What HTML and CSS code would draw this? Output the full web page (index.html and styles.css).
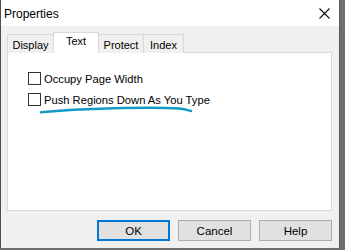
FILE: index.html
```html
<!DOCTYPE html>
<html>
<head>
<meta charset="utf-8">
<link rel="stylesheet" href="styles.css">
</head>
<body>
<div class="dialog">
  <div class="titlebar">
    <span class="title">Properties</span>
    <svg class="close" width="11" height="11" viewBox="0 0 11 11"><path d="M0.5 0.5 L10.5 10.5 M10.5 0.5 L0.5 10.5" stroke="#111" stroke-width="1.1" fill="none"/></svg>
  </div>
  <div class="body">
    <div class="tabs">
      <div class="tab t-display">Display</div>
      <div class="tab t-text selected">Text</div>
      <div class="tab t-protect">Protect</div>
      <div class="tab t-index">Index</div>
    </div>
    <div class="panel">
      <label class="row"><span class="box"></span><span>Occupy Page Width</span></label>
      <label class="row"><span class="box"></span><span>Push Regions Down As You Type</span></label>
      <svg class="scribble" width="160" height="10" viewBox="0 0 160 10"><path d="M2 7.3 C 20 5.5, 45 4, 75 3.2 C 105 2.5, 125 2.4, 140 3.5 C 147 4, 150 5.5, 152 6" stroke="#1799c6" stroke-width="2.4" fill="none" stroke-linecap="round"/></svg>
    </div>
    <div class="buttons">
      <div class="btn default">OK</div>
      <div class="btn">Cancel</div>
      <div class="btn">Help</div>
    </div>
  </div>
</div>
</body>
</html>
```
FILE: styles.css
```css
html, body {
  margin: 0;
  padding: 0;
}
body {
  width: 345px;
  height: 250px;
  background: #6f6f6f;
  font-family: "Liberation Sans", Arial, sans-serif;
  font-size: 11px;
  color: #000;
  overflow: hidden;
}
.dialog {
  width: 338px;
  height: 248px;
  border-left: 1px solid #4d4d4d;
  border-right: 1px solid #5a5a5a;
  background: #f0f0f0;
  display: flex;
  flex-direction: column;
}
.titlebar {
  height: 26px;
  background: #ffffff;
  display: flex;
  align-items: center;
  justify-content: space-between;
  padding: 0 9px 0 3px;
  flex-shrink: 0;
}
.title {
  font-size: 12px;
  padding-top: 1px;
}
.close {
  display: block;
  margin-top: 1px;
}
.body {
  padding: 7px 7px 0 6px;
  display: flex;
  flex-direction: column;
}
.tabs {
  display: flex;
  align-items: flex-end;
  height: 20px;
  margin-bottom: -1px;
  position: relative;
  z-index: 1;
}
.tab {
  box-sizing: border-box;
  height: 19px;
  border: 1px solid #d9d9d9;
  border-bottom: none;
  background: #f0f0f0;
  display: flex;
  justify-content: center;
  align-items: center;
  padding-top: 1px;
}
.tab + .tab {
  margin-left: -1px;
}
.t-display { width: 47px; }
.t-text { width: 46px; }
.t-protect { width: 46px; }
.t-index { width: 41px; }
.tab.selected {
  height: 21px;
  background: #ffffff;
  padding-top: 0;
  padding-bottom: 4px;
  position: relative;
  z-index: 2;
}
.panel {
  box-sizing: border-box;
  width: 325px;
  height: 159px;
  border: 1px solid #d9d9d9;
  background: #ffffff;
  padding: 19px 0 0 20px;
  display: flex;
  flex-direction: column;
  gap: 8px;
  position: relative;
}
.row {
  display: flex;
  align-items: center;
  gap: 3px;
  height: 13px;
  font-size: 11.2px;
}
.box {
  box-sizing: border-box;
  width: 13px;
  height: 13px;
  border: 1px solid #333333;
  background: #ffffff;
  flex-shrink: 0;
}
.scribble {
  position: absolute;
  left: 31px;
  top: 52px;
}
.buttons {
  display: flex;
  justify-content: flex-end;
  gap: 8px;
  margin-top: 9px;
  padding-right: 0;
}
.btn {
  box-sizing: border-box;
  width: 73px;
  height: 21px;
  border: 1px solid #adadad;
  background: #e1e1e1;
  display: flex;
  align-items: center;
  justify-content: center;
  font-size: 11.5px;
}
.btn.default {
  border: 2px solid #0078d7;
}
```
